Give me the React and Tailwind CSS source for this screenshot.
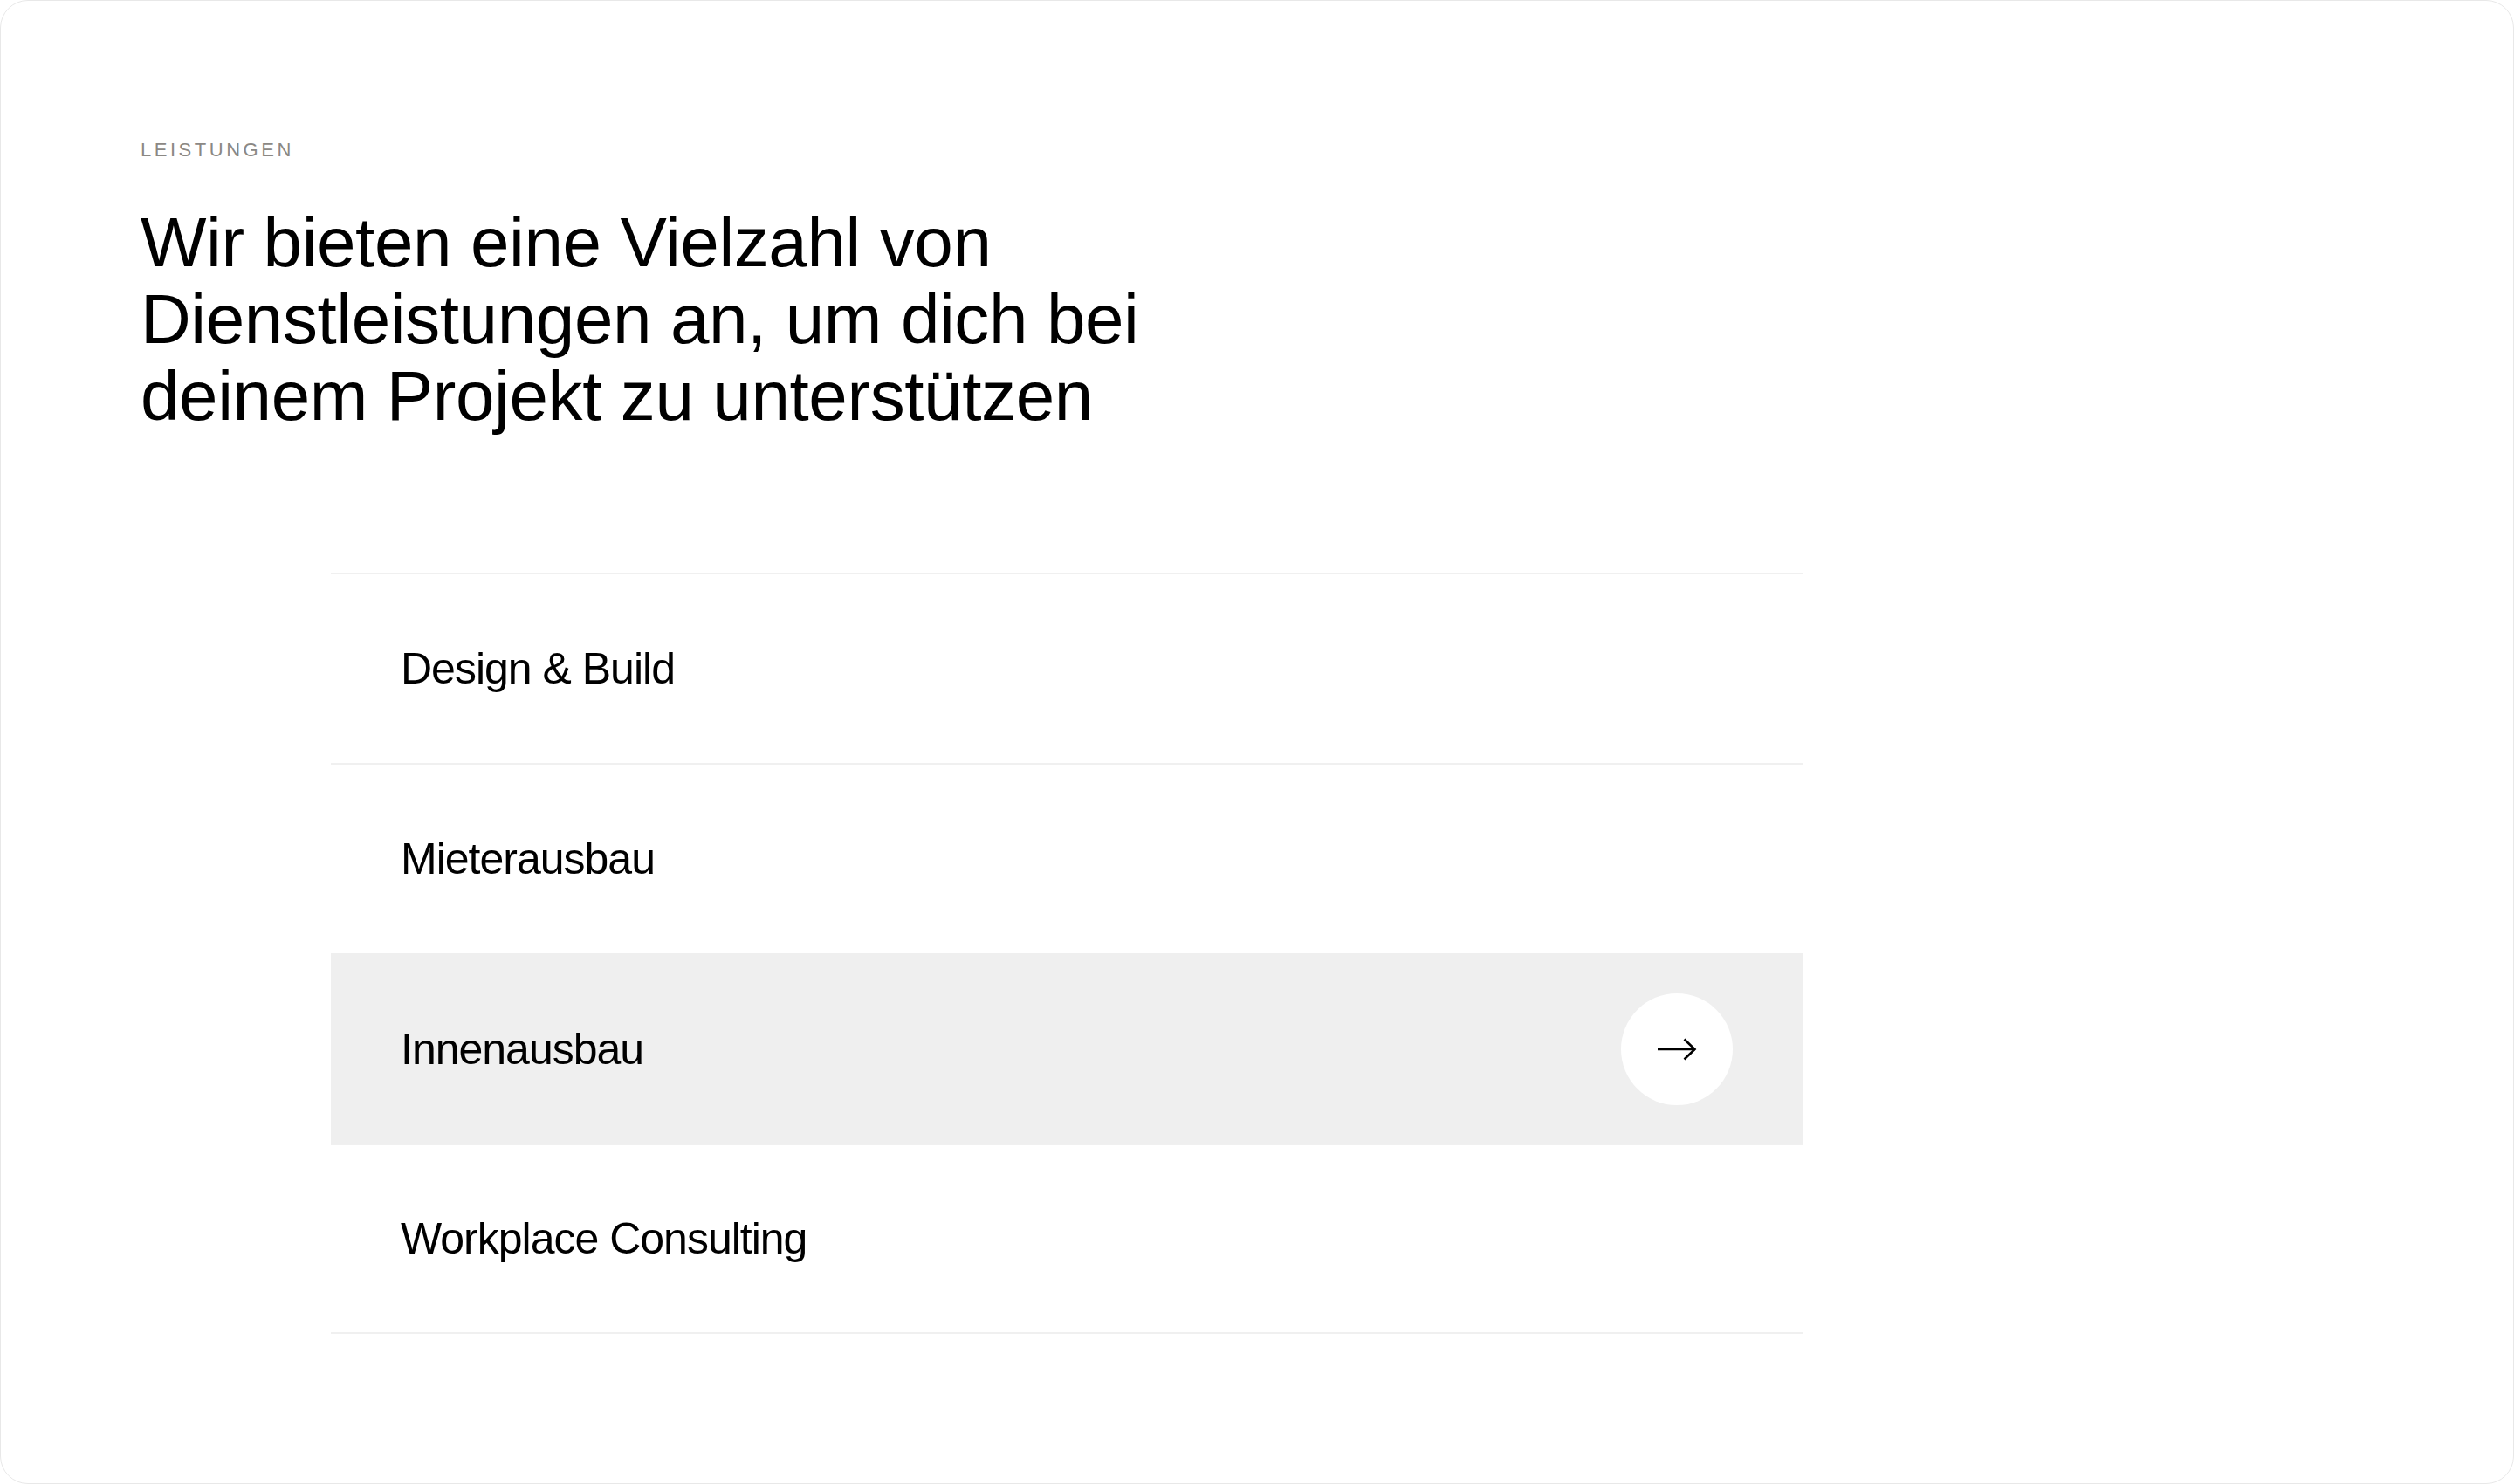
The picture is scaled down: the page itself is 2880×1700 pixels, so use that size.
import React from 'react';

const services = ['Design & Build', 'Mieterausbau', 'Innenausbau', 'Workplace Consulting'];

const ArrowRight = () => (
  <svg width="46" height="28" viewBox="0 0 46 28" fill="none" stroke="#000" strokeWidth="2.6">
    <path d="M1 14h43" />
    <path d="M31.5 2.5 43.5 14 31.5 25.5" />
  </svg>
);

const ServiceRow = ({ label, active, last }) => (
  <div
    className={`flex h-[218px] items-center justify-between border-t-2 pl-[80px] pr-[80px] ${
      active ? 'border-[#efefef] bg-[#efefef]' : 'border-[#f0f0f0] bg-white'
    } ${last ? 'border-b-2' : ''}`}
  >
    <span className="text-[50px] leading-none tracking-[-0.02em] text-black">{label}</span>
    {active && (
      <span className="flex h-[128px] w-[128px] items-center justify-center rounded-full bg-white">
        <ArrowRight />
      </span>
    )}
  </div>
);

export default function App() {
  return (
    <div className="h-[1700px] w-[2880px] bg-white" style={{ fontFamily: '"Liberation Sans", Arial, sans-serif' }}>
      <div className="h-full w-full rounded-[32px] border border-[#e8e8e8] px-[160px] pt-[160px]">
        <p className="text-[22px] leading-[22px] tracking-[0.16em] text-[#8b8884] uppercase">Leistungen</p>
        <h1 className="mt-[51px] text-[80px] font-normal leading-[88px] tracking-[-0.005em] text-black">
          Wir bieten eine Vielzahl von
          <br />
          Dienstleistungen an, um dich bei
          <br />
          deinem Projekt zu unterstützen
        </h1>
        <div className="ml-[218px] mt-[158px] w-[1686px]">
          {services.map((s, i) => (
            <ServiceRow key={s} label={s} active={i === 2} last={i === services.length - 1} />
          ))}
        </div>
      </div>
    </div>
  );
}
